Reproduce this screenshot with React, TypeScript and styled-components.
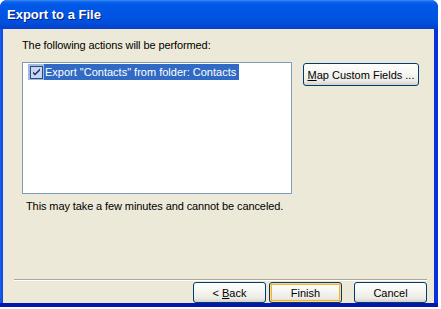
import React from 'react';
import styled, { createGlobalStyle, css } from 'styled-components';

const GlobalStyle = createGlobalStyle`
	html, body {
		margin: 0;
		padding: 0;
		background: #ffffff;
	}
	body {
		font-family: "Liberation Sans", Arial, sans-serif;
		font-size: 11px;
		color: #000000;
	}
`;

const Window = styled.div`
	width: 438px;
	height: 307px;
	display: flex;
	flex-direction: column;
	background: #0831d9;
	border-radius: 7px 7px 0 0;
	overflow: hidden;
`;

const TitleBar = styled.div`
	height: 29px;
	flex: none;
	display: flex;
	align-items: center;
	padding: 0 0 0 7px;
	background: linear-gradient(
		to bottom,
		#3b8cf6 0px,
		#0c63ed 2px,
		#0058e6 5px,
		#0155e4 14px,
		#0150dd 22px,
		#0245cf 27px,
		#0a3fcb 29px
	);
	color: #ffffff;
	font-family: "Liberation Sans", Arial, sans-serif;
	font-weight: bold;
	font-size: 13px;
	text-shadow: 1px 1px 0 #0a1e7a;
`;

const Frame = styled.div`
	flex: 1;
	display: flex;
	padding: 0 4px 4px 3px;
	background: linear-gradient(to right, #1660ee 0, #0a48e0 3px, #0831d9 3px, #0831d9 100%);
	box-shadow: inset 0 -4px 0 #0019a8;
`;

const Client = styled.div`
	flex: 1;
	background: #ece9d8;
	display: flex;
	flex-direction: column;
	padding: 10px 7px 0 11px;
`;

const Label = styled.div`
	line-height: 13px;
	padding-left: 8px;
	margin-bottom: 10px;
	letter-spacing: -0.1px;
`;

const ContentRow = styled.div`
	display: flex;
	align-items: flex-start;
	gap: 11px;
	padding-left: 8px;
`;

const ListBox = styled.div`
	width: 270px;
	height: 132px;
	box-sizing: border-box;
	border: 1px solid #7f9db9;
	background: #ffffff;
	padding: 1px 5px;
`;

const Item = styled.div`
	display: flex;
	align-items: center;
	height: 16px;
`;

const CheckArea = styled.div`
	width: 16px;
	height: 16px;
	background: #a5b9e0;
	display: flex;
	align-items: center;
	justify-content: center;
`;

const CheckBox = styled.div`
	width: 13px;
	height: 13px;
	box-sizing: border-box;
	border: 1px solid #1c5180;
	background: #c9d6ee;
	display: flex;
	align-items: center;
	justify-content: center;
`;

const ItemText = styled.div`
	background: #316ac5;
	color: #ffffff;
	height: 16px;
	line-height: 16px;
	padding: 0 3px 0 1px;
	white-space: nowrap;
`;

const Button = styled.button<{ $focused?: boolean }>`
	font-family: "Liberation Sans", Arial, sans-serif;
	font-size: 11px;
	color: #000000;
	box-sizing: border-box;
	border: 1px solid #003c74;
	border-radius: 3px;
	background: linear-gradient(to bottom, #ffffff 0%, #f6f6f2 40%, #ecebe5 80%, #d6d0c5 100%);
	padding: 0;
	display: flex;
	align-items: center;
	justify-content: center;
	${(p) =>
		p.$focused &&
		css`
			box-shadow: inset 0 0 0 1px #ffd58c, inset 0 0 0 2px #f8b330;
		`}

	u {
		text-decoration: underline;
	}
`;

const MapButton = styled(Button)`
	width: 116px;
	height: 23px;
	margin-top: 1px;
`;

const Note = styled.div`
	line-height: 13px;
	margin-top: 6px;
	padding-left: 12px;
	letter-spacing: -0.1px;
`;

const Spacer = styled.div`
	flex: 1;
`;

const Separator = styled.div`
	height: 1px;
	background: #aca899;
	border-bottom: 1px solid #ffffff;
	margin-bottom: 1px;
`;

const ButtonRow = styled.div`
	display: flex;
	justify-content: flex-end;
	align-items: center;
`;

const WizardButton = styled(Button)<{ $gapAfter?: number }>`
	width: 73px;
	height: 21px;
	margin-right: ${(p) => p.$gapAfter ?? 0}px;
`;

function CheckMark() {
	return (
		<svg width="9" height="9" viewBox="0 0 9 9">
			<path d="M1 3.5 L3 5.5 L8 0.5 L8 2.5 L3 7.5 L1 5.5 Z" fill="#1c2a6e" />
		</svg>
	);
}

export default function App() {
	return (
		<>
			<GlobalStyle />
			<Window>
				<TitleBar>Export to a File</TitleBar>
				<Frame>
					<Client>
						<Label>The following actions will be performed:</Label>
						<ContentRow>
							<ListBox>
								<Item>
									<CheckArea>
										<CheckBox>
											<CheckMark />
										</CheckBox>
									</CheckArea>
									<ItemText>Export "Contacts" from folder: Contacts</ItemText>
								</Item>
							</ListBox>
							<MapButton>
								<span>
									<u>M</u>ap Custom Fields ...
								</span>
							</MapButton>
						</ContentRow>
						<Note>This may take a few minutes and cannot be canceled.</Note>
						<Spacer />
						<Separator />
						<ButtonRow>
							<WizardButton $gapAfter={3}>
								<span>
									&lt; <u>B</u>ack
								</span>
							</WizardButton>
							<WizardButton $focused $gapAfter={12}>
								Finish
							</WizardButton>
							<WizardButton>Cancel</WizardButton>
						</ButtonRow>
					</Client>
				</Frame>
			</Window>
		</>
	);
}
